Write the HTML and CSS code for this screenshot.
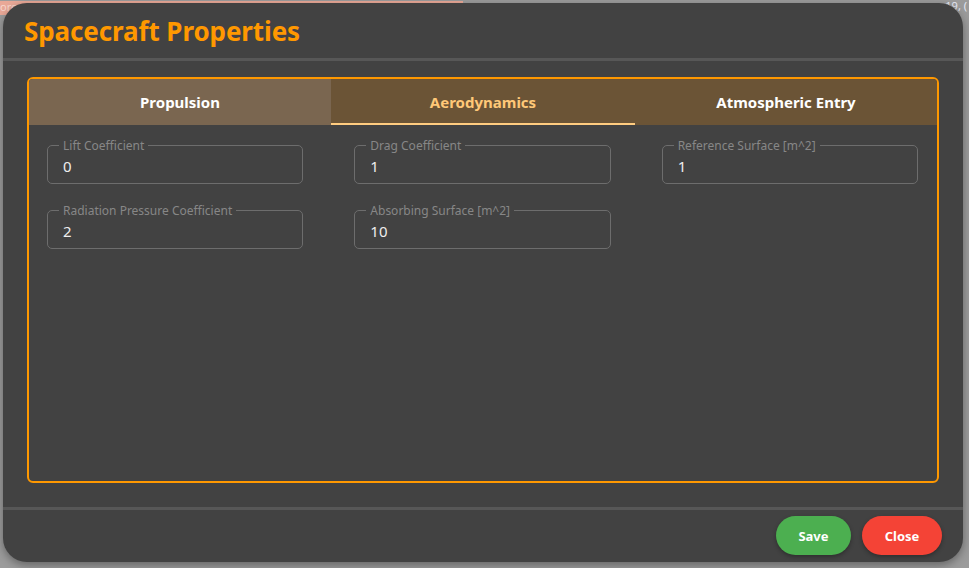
FILE: index.html
```html
<!DOCTYPE html>
<html lang="en">
<head>
<meta charset="utf-8">
<title>Spacecraft Properties</title>
<link rel="stylesheet" href="styles.css">
</head>
<body>
<div class="backdrop">
  <div class="backdrop-strip"><span class="strip-text">ore</span></div>
  <span class="backdrop-corner">19, (</span>
</div>
<div class="dialog">
  <header class="dialog-header">
    <h1 class="dialog-title">Spacecraft Properties</h1>
  </header>
  <main class="dialog-body">
    <section class="tabs-box">
      <nav class="tabs">
        <div class="tab tab-hover">Propulsion</div>
        <div class="tab tab-active">Aerodynamics</div>
        <div class="tab">Atmospheric Entry</div>
      </nav>
      <div class="tab-panel">
        <div class="field"><span class="field-label">Lift Coefficient</span><span class="field-value">0</span></div>
        <div class="field"><span class="field-label">Drag Coefficient</span><span class="field-value">1</span></div>
        <div class="field"><span class="field-label">Reference Surface [m^2]</span><span class="field-value">1</span></div>
        <div class="field"><span class="field-label">Radiation Pressure Coefficient</span><span class="field-value">2</span></div>
        <div class="field"><span class="field-label">Absorbing Surface [m^2]</span><span class="field-value">10</span></div>
      </div>
    </section>
  </main>
  <footer class="dialog-footer">
    <button class="btn btn-save">Save</button>
    <button class="btn btn-close">Close</button>
  </footer>
</div>
</body>
</html>
```

FILE: styles.css
```css
html, body {
  margin: 0;
  padding: 0;
}
body {
  width: 969px;
  height: 568px;
  overflow: hidden;
  background: #9b9b9b;
  font-family: "Noto Sans", "Open Sans", sans-serif;
  position: relative;
}
.backdrop {
  position: absolute;
  inset: 0;
}
.backdrop-strip {
  width: 463px;
  height: 14px;
  background: #e9a897;
}
.strip-text {
  display: block;
  font-size: 11px;
  line-height: 12px;
  color: #f7d6cc;
  margin-top: 1px;
}
.backdrop-corner {
  position: absolute;
  right: 2px;
  top: 0;
  font-size: 11px;
  line-height: 12px;
  color: #e4e8f4;
}
.dialog {
  position: absolute;
  left: 3px;
  top: 3px;
  width: 960px;
  height: 559px;
  background: #424242;
  border-radius: 24px;
  box-shadow: 0 3px 8px rgba(0, 0, 0, 0.35);
  display: flex;
  flex-direction: column;
  overflow: hidden;
}
.dialog-header {
  height: 55px;
  border-bottom: 3px solid #575757;
  display: flex;
  align-items: center;
  padding-left: 21px;
  flex-shrink: 0;
}
.dialog-title {
  margin: 0;
  font-size: 26px;
  font-weight: 700;
  color: #ff9800;
  letter-spacing: -0.1px;
}
.dialog-body {
  flex: 1;
  padding: 16px 24px 24px 24px;
  display: flex;
  flex-direction: column;
}
.tabs-box {
  flex: 1;
  border: 2px solid #ff9800;
  border-radius: 6px;
  display: flex;
  flex-direction: column;
  overflow: hidden;
}
.tabs {
  display: grid;
  grid-template-columns: 302px 304px 1fr;
  height: 46px;
  background: #6b5436;
}
.tab {
  display: flex;
  align-items: center;
  justify-content: center;
  font-size: 15px;
  font-weight: 700;
  color: #ffffff;
  box-sizing: border-box;
}
.tab-hover {
  background: #7a6650;
}
.tab-active {
  color: #ffc878;
  border-bottom: 2px solid #ffcc80;
  padding-top: 2px;
}
.tab-panel {
  flex: 1;
  padding: 20px 19px 20px 18px;
  display: grid;
  grid-template-columns: repeat(3, 1fr);
  column-gap: 51px;
  row-gap: 26px;
  align-content: start;
}
.field {
  position: relative;
  height: 39px;
  box-sizing: border-box;
  border: 1px solid #6d6d6d;
  border-radius: 5px;
  display: flex;
  align-items: center;
  padding: 3px 15px 0 15px;
}
.field-label {
  position: absolute;
  left: 11px;
  top: -8px;
  padding: 0 4px;
  background: #424242;
  font-size: 12px;
  line-height: 16px;
  color: #878787;
  white-space: nowrap;
}
.field-value {
  font-size: 15px;
  color: #eeeeee;
}
.dialog-footer {
  height: 55px;
  box-sizing: border-box;
  flex-shrink: 0;
  border-top: 3px solid #575757;
  display: flex;
  justify-content: flex-end;
  align-items: flex-start;
  gap: 11px;
  padding: 6px 21px 0 0;
}
.btn {
  height: 39px;
  border: none;
  border-radius: 20px;
  font-family: "Noto Sans", "Open Sans", sans-serif;
  font-size: 13px;
  font-weight: 700;
  color: #ffffff;
  box-shadow: 0 2px 4px rgba(0, 0, 0, 0.3);
  padding: 0;
}
.btn-save {
  width: 75px;
  background: #4caf50;
}
.btn-close {
  width: 80px;
  background: #f44336;
}
```
